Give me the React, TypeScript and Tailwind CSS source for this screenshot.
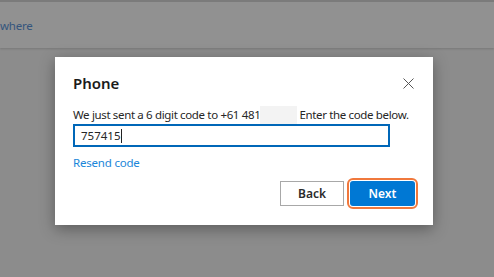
import React from "react";

const font = { fontFamily: '"Noto Sans", "Liberation Sans", sans-serif' };

const App: React.FC = () => {
  return (
    <div className="relative h-[277px] w-[494px] overflow-hidden bg-[#8c8c8c]" style={font}>
      {/* page behind the overlay */}
      <header className="h-[48px] border-t-2 border-[#7b7b7b] bg-[#919191] shadow-[0_1px_2px_rgba(0,0,0,0.15)]">
        <div className="flex h-full items-center pt-[2px] text-[11.5px] tracking-[-0.2px] text-[#34557d]">where</div>
      </header>

      {/* Dialog */}
      <div className="absolute left-[55px] top-[57px] flex h-[168px] w-[378px] flex-col bg-white px-[18px] pb-[19px] pt-[14px] shadow-[0_4px_14px_rgba(0,0,0,0.35)]">
        <div className="flex items-center justify-between">
          <h2 className="text-[15px] font-semibold leading-[24px] text-[#1b1b1b]">Phone</h2>
          <button className="mr-[1px] flex h-[12px] w-[12px] items-center justify-center" aria-label="Close">
            <svg width="11" height="11" viewBox="0 0 11 11">
              <path d="M0.5 0.5 L10.5 10.5 M10.5 0.5 L0.5 10.5" stroke="#555" strokeWidth="1" />
            </svg>
          </button>
        </div>

        <p className="mt-[10px] whitespace-nowrap text-[11.5px] leading-[17px] tracking-[-0.35px] text-[#262626]">
          We just sent a 6 digit code to +61 481
          <span className="mr-[2px] inline-block h-[18px] w-[37px] translate-y-[1px] bg-[#f3f3f3] align-bottom" />
          Enter the code below.
        </p>

        <div className="mt-[1px] flex h-[23px] w-[317px] items-center border-2 border-[#0067b8] px-[6px] text-[11.5px] text-[#262626]">
          757415
          <span className="ml-[1px] h-[14px] w-px bg-[#222]" />
        </div>

        <a className="mt-[7px] text-[11.5px] leading-[17px] tracking-[-0.2px] text-[#1a86d9]">Resend code</a>

        <div className="mt-auto flex justify-end gap-[6px]">
          <button className="h-[25px] w-[64px] border border-[#a8a8a8] bg-white text-[12px] font-semibold text-[#2b2b2b]">
            Back
          </button>
          <button className="h-[25px] w-[65px] rounded-[3px] bg-[#0078d4] text-[12px] font-semibold text-white outline-2 outline-offset-1 outline-[#f0783c] [outline-style:solid]">
            Next
          </button>
        </div>
      </div>
    </div>
  );
};

export default App;
